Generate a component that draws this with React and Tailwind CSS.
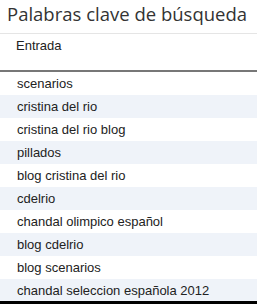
const KEYWORDS = [
  'scenarios',
  'cristina del rio',
  'cristina del rio blog',
  'pillados',
  'blog cristina del rio',
  'cdelrio',
  'chandal olimpico español',
  'blog cdelrio',
  'blog scenarios',
  'chandal seleccion española 2012',
]

export default function App() {
  return (
    <div className="w-[257px] h-[304px] overflow-hidden bg-white border-b-[3px] border-black">
      <h2 className="px-[7px] pt-[2px] h-[33px] whitespace-nowrap text-[18.5px] leading-[24px] text-[#333] font-['Open_Sans',sans-serif]">
        Palabras clave de búsqueda
      </h2>
      <table className="w-full border-collapse font-['Liberation_Sans',Arial,sans-serif] text-[13px] text-[#222]">
        <thead>
          <tr className="border-t border-[#e5e5e5] border-b-2 border-b-[#777]">
            <th className="h-[37px] pl-[16px] pb-[12px] text-left font-normal align-middle">Entrada</th>
          </tr>
        </thead>
        <tbody>
          {KEYWORDS.map((kw, i) => (
            <tr key={kw} className={i % 2 === 1 ? 'bg-[#eff3f9]' : 'bg-white'}>
              <td className="h-[23px] pl-[17px] leading-[23px]">{kw}</td>
            </tr>
          ))}
        </tbody>
      </table>
    </div>
  )
}
